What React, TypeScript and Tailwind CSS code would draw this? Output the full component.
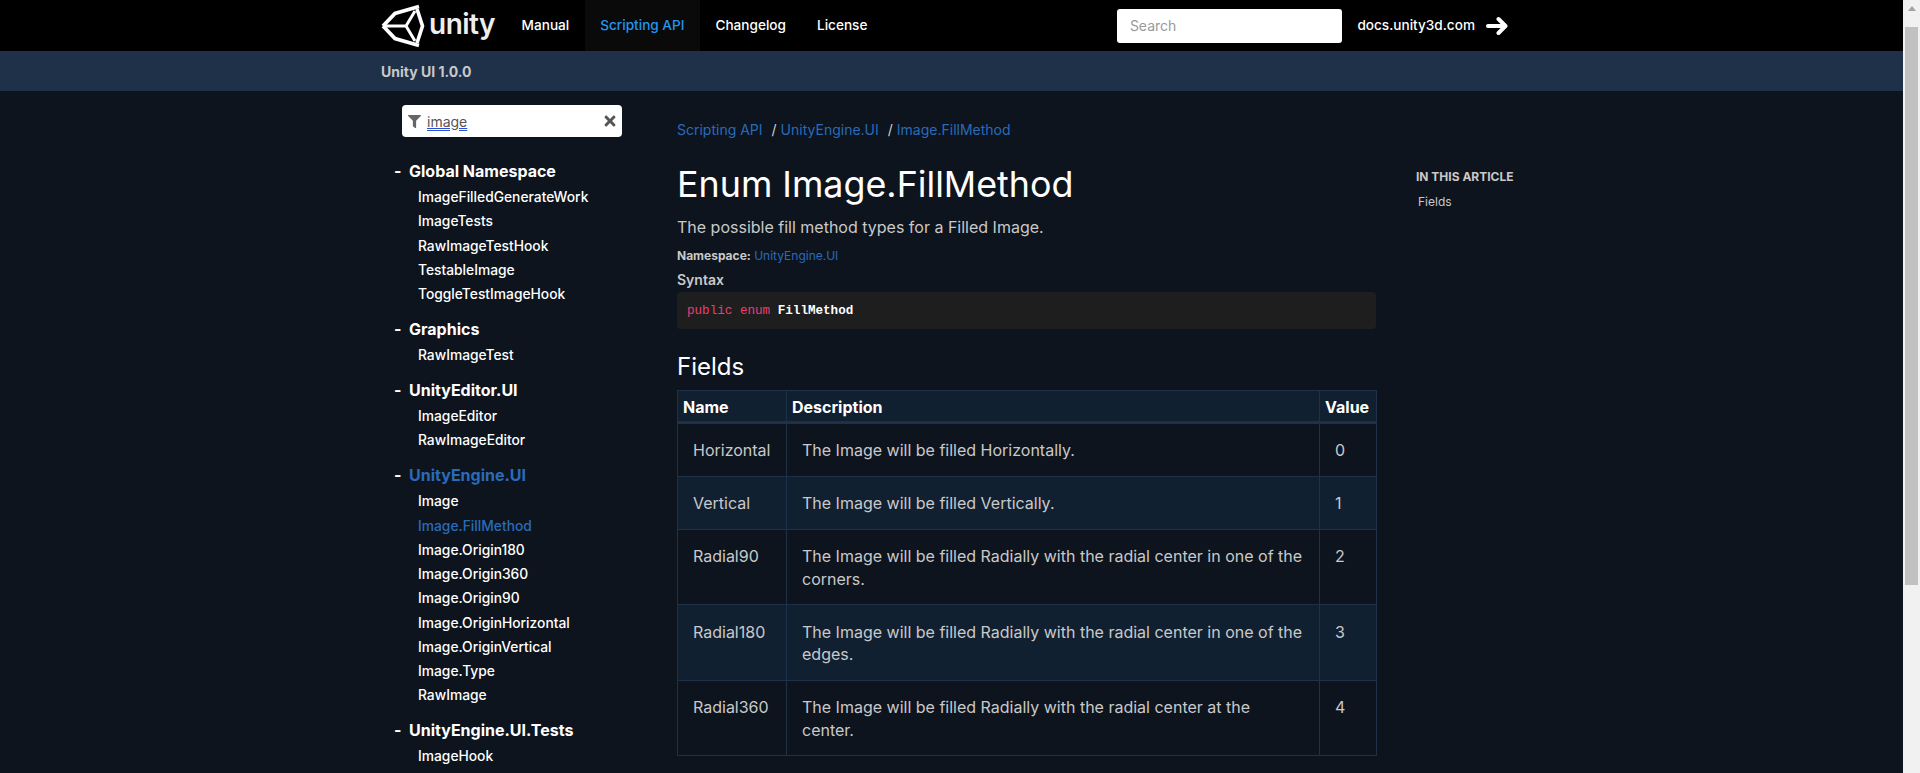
import React from 'react';
import { FaFilter, FaTimes } from 'react-icons/fa';

const navLinks = [
  { label: 'Manual', active: false },
  { label: 'Scripting API', active: true },
  { label: 'Changelog', active: false },
  { label: 'License', active: false },
];

const tree = [
  { name: 'Global Namespace', items: ['ImageFilledGenerateWork', 'ImageTests', 'RawImageTestHook', 'TestableImage', 'ToggleTestImageHook'] },
  { name: 'Graphics', items: ['RawImageTest'] },
  { name: 'UnityEditor.UI', items: ['ImageEditor', 'RawImageEditor'] },
  {
    name: 'UnityEngine.UI',
    active: true,
    items: ['Image', 'Image.FillMethod', 'Image.Origin180', 'Image.Origin360', 'Image.Origin90', 'Image.OriginHorizontal', 'Image.OriginVertical', 'Image.Type', 'RawImage'],
  },
  { name: 'UnityEngine.UI.Tests', items: ['ImageHook'] },
];

const fields = [
  { name: 'Horizontal', desc: 'The Image will be filled Horizontally.', value: 0 },
  { name: 'Vertical', desc: 'The Image will be filled Vertically.', value: 1 },
  { name: 'Radial90', desc: 'The Image will be filled Radially with the radial center in one of the corners.', value: 2 },
  { name: 'Radial180', desc: 'The Image will be filled Radially with the radial center in one of the edges.', value: 3 },
  { name: 'Radial360', desc: 'The Image will be filled Radially with the radial center at the center.', value: 4 },
];

const UnityMark = () => (
  <svg width="50" height="46" viewBox="0 0 50 46" fill="none" stroke="white" strokeWidth="3" strokeLinejoin="miter">
    <path d="M6 23H28M28 23L37 8M28 23L37 38" />
    <path d="M5 23L17 10.5L41 3.5" strokeWidth="3.8" />
    <path d="M5 23L17 35.5L41 42.5" strokeWidth="3.8" />
    <path d="M39 6L44.5 23L39 40" strokeWidth="3.6" />
  </svg>
);

const Header = () => (
  <header className="h-[51px] bg-black flex items-center pl-[378px]">
    <UnityMark />
    <span className="ml-[1px] text-[28px] leading-none font-semibold tracking-[-0.5px] text-[#eeeeee] -mt-[3px]">unity</span>
    <nav className="ml-[11px] flex h-full items-center text-[13.6px] font-medium">
      {navLinks.map((link) => (
        <a
          key={link.label}
          href="#"
          className={
            link.active
              ? 'h-full px-[15.5px] flex items-center bg-[#0a0a0a] text-[#2196f3]'
              : 'h-full px-[15.5px] flex items-center text-white'
          }
        >
          {link.label}
        </a>
      ))}
    </nav>
    <div className="ml-[234px] h-[34px] w-[225px] rounded-[3px] bg-white flex items-center px-[13px] text-[14px] text-[#9a9a9a]">
      Search
    </div>
    <a href="#" className="ml-[15.5px] text-[13.6px] font-medium text-white">docs.unity3d.com</a>
    <svg className="ml-[11px]" width="22" height="20" viewBox="0 0 22 20" fill="none" stroke="white" strokeWidth="4" strokeLinecap="round" strokeLinejoin="round">
      <path d="M2 10H19M12.5 3L19.5 10L12.5 17" />
    </svg>
  </header>
);

const Sidebar = () => (
  <aside className="w-[295px] shrink-0 pt-[14px]">
    <div className="ml-[20px] h-[32px] w-[220px] rounded-[4px] bg-white flex items-center pl-[6px] pr-[4px] text-[14px] text-[#555555]">
      <FaFilter size={13} className="text-[#666666]" />
      <span className="ml-[6px] underline decoration-double decoration-[#2a4fd0]">image</span>
      <FaTimes size={16} className="ml-auto text-[#555555]" />
    </div>
    <div className="mt-[20px] pl-[12px]">
      {tree.map((group) => (
        <div key={group.name} className="mb-[8.8px]">
          <div className="flex h-[28px] items-center text-[16px] font-bold leading-none text-white">
            <span className="w-[15px]">-</span>
            <a href="#" className={group.active ? 'text-[#2a6bb8]' : ''}>{group.name}</a>
          </div>
          <ul className="pl-[24px]">
            {group.items.map((item) => (
              <li key={item} className={item === 'Image.FillMethod' ? 'text-[13.8px] leading-[24.25px] font-medium text-[#2a6bb8]' : 'text-[13.8px] leading-[24.25px] font-medium text-white'}>
                {item}
              </li>
            ))}
          </ul>
        </div>
      ))}
    </div>
  </aside>
);

const Article = () => (
  <main className="w-[699px] shrink-0 pt-[28px]">
    <div className="flex h-[20px] items-center text-[14px] text-[#2a6bb8]">
      <a href="#">Scripting API</a>
      <span className="ml-[9px] mr-[4px] text-[#d0d0d0]">/</span>
      <a href="#">UnityEngine.UI</a>
      <span className="ml-[9px] mr-[4px] text-[#d0d0d0]">/</span>
      <a href="#">Image.FillMethod</a>
    </div>
    <h1 className="mt-[23px] text-[35.84px] leading-[44px] text-white">Enum Image.FillMethod</h1>
    <p className="mt-[9px] text-[16px] leading-[24px] text-[#c9c9c9]">The possible fill method types for a Filled Image.</p>
    <div className="mt-[8px] text-[12px] leading-[18px] text-[#c9c9c9]">
      <b className="font-bold">Namespace:</b> <a href="#" className="text-[#2a6bb8]">UnityEngine.UI</a>
    </div>
    <h5 className="mt-[4px] text-[14px] leading-[21px] font-semibold text-[#c9c9c9]">Syntax</h5>
    <pre className="mt-[2px] h-[37px] rounded-[4px] bg-[#1e1e1e] px-[10px] pt-[2px] flex items-center font-['DejaVu_Sans_Mono',monospace] text-[12.6px]">
      <code>
        <span className="text-[#e83e75]">public enum</span> <span className="font-bold text-white">FillMethod</span>
      </code>
    </pre>
    <h3 className="mt-[23px] text-[24px] leading-[30px] text-white">Fields</h3>
    <table className="mt-[8px] w-[699px] table-fixed border-collapse text-[16px] text-[#c9c9c9]">
      <colgroup>
        <col className="w-[109px]" />
        <col className="w-[533px]" />
        <col className="w-[57px]" />
      </colgroup>
      <thead className="bg-[#112031] text-white">
        <tr className="h-[32px] border-b-[3px] border-[#1e3149]">
          <th className="border border-[#1e3149] px-[5px] pt-[2px] text-left font-bold">Name</th>
          <th className="border border-[#1e3149] px-[5px] pt-[2px] text-left font-bold">Description</th>
          <th className="border border-[#1e3149] px-[5px] pt-[2px] text-left font-bold">Value</th>
        </tr>
      </thead>
      <tbody>
        {fields.map((f) => (
          <tr key={f.name} className="even:bg-[#112031]">
            <td className="border border-[#1e3149] px-[15px] pt-[15.4px] pb-[14.2px] align-top leading-[22.4px]">{f.name}</td>
            <td className="border border-[#1e3149] px-[15px] pt-[15.4px] pb-[14.2px] align-top leading-[22.4px]">{f.desc}</td>
            <td className="border border-[#1e3149] px-[15px] pt-[15.4px] pb-[14.2px] align-top leading-[22.4px]">{f.value}</td>
          </tr>
        ))}
      </tbody>
    </table>
  </main>
);

const Scrollbar = () => (
  <div className="w-[17px] shrink-0 bg-[#f1f1f1] flex flex-col items-center">
    <div className="h-[17px] w-full flex items-center justify-center">
      <div className="h-0 w-0 border-x-[4px] border-b-[5px] border-x-transparent border-b-[#a3a3a3]" />
    </div>
    <div className="mt-[10px] h-[558px] w-[13px] bg-[#c1c1c1]" />
  </div>
);

export default function App() {
  return (
    <div className="flex h-[773px] overflow-hidden bg-[#0d141e] font-['Inter',sans-serif]">
      <div className="min-w-0 flex-1">
        <Header />
        <div className="h-[40px] bg-[#1e3149] pl-[381px] flex items-center text-[14px] font-bold text-[#c9c9c9]">Unity UI 1.0.0</div>
        <div className="flex pl-[382px]">
          <Sidebar />
          <Article />
          <aside className="ml-[40px] pt-[78px]">
            <h5 className="text-[12px] leading-[16px] font-bold text-[#c9c9c9]">IN THIS ARTICLE</h5>
            <a href="#" className="mt-[9px] ml-[2px] block text-[12px] leading-[16px] text-[#c9c9c9]">Fields</a>
          </aside>
        </div>
      </div>
      <Scrollbar />
    </div>
  );
}
